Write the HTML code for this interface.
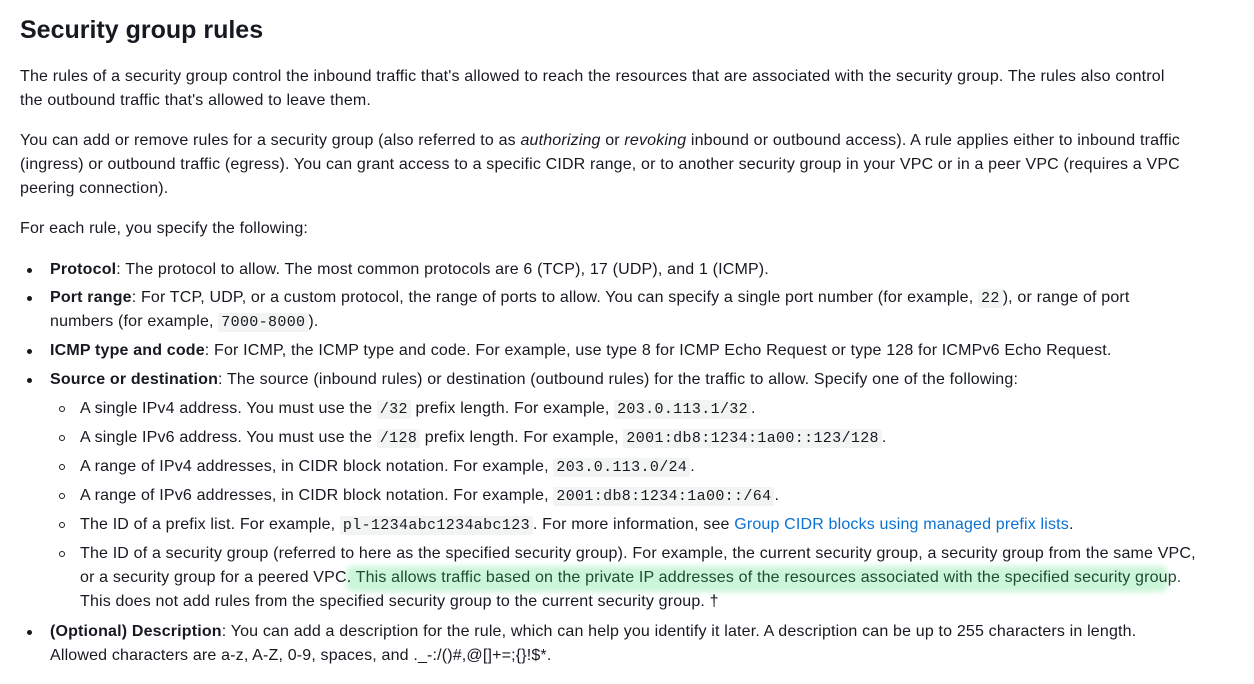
<!DOCTYPE html>
<html><head><meta charset="utf-8"><style>
body{margin:0;width:1254px;height:684px;background:#fff;position:relative;overflow:hidden;font-family:"Liberation Sans",sans-serif;color:#16191f}
.l{position:absolute;font-size:16px;line-height:20px;height:20px;white-space:nowrap;letter-spacing:0.17px}
h1{position:absolute;left:20px;top:13px;margin:0;font-size:25px;line-height:34px;font-weight:bold}
code{font-family:"Liberation Mono",monospace;font-size:15px;letter-spacing:0.35px;background:#f2f3f3;padding:1px 3px;border-radius:2px}
a{color:#0972d3;text-decoration:none}
.d{position:absolute;width:5px;height:5px;border-radius:50%;background:#16191f}
.c{position:absolute;width:4px;height:4px;border-radius:50%;border:1px solid #16191f}
.hl{position:absolute;left:346px;top:566px;width:822px;height:26px;background:rgba(140,236,170,.45);filter:blur(3px);border-radius:8px}
</style></head><body>
<h1>Security group rules</h1>
<div class="l" style="left:20px;top:67px">The rules of a security group control the inbound traffic that's allowed to reach the resources that are associated with the security group. The rules also control</div>
<div class="l" style="left:20px;top:91px">the outbound traffic that's allowed to leave them.</div>
<div class="l" style="left:20px;top:131px">You can add or remove rules for a security group (also referred to as <i>authorizing</i> or <i>revoking</i> inbound or outbound access). A rule applies either to inbound traffic</div>
<div class="l" style="left:20px;top:155px">(ingress) or outbound traffic (egress). You can grant access to a specific CIDR range, or to another security group in your VPC or in a peer VPC (requires a VPC</div>
<div class="l" style="left:20px;top:179px">peering connection).</div>
<div class="l" style="left:20px;top:219px">For each rule, you specify the following:</div>

<div class="d" style="left:27px;top:268px"></div>
<div class="l" style="left:50px;top:260px"><b>Protocol</b>: The protocol to allow. The most common protocols are 6 (TCP), 17 (UDP), and 1 (ICMP).</div>
<div class="d" style="left:27px;top:296px"></div>
<div class="l" style="left:50px;top:288px"><b>Port range</b>: For TCP, UDP, or a custom protocol, the range of ports to allow. You can specify a single port number (for example, <code>22</code>), or range of port</div>
<div class="l" style="left:50px;top:312px">numbers (for example, <code>7000-8000</code>).</div>
<div class="d" style="left:27px;top:349px"></div>
<div class="l" style="left:50px;top:341px"><b>ICMP type and code</b>: For ICMP, the ICMP type and code. For example, use type 8 for ICMP Echo Request or type 128 for ICMPv6 Echo Request.</div>
<div class="d" style="left:27px;top:378px"></div>
<div class="l" style="left:50px;top:370px"><b>Source or destination</b>: The source (inbound rules) or destination (outbound rules) for the traffic to allow. Specify one of the following:</div>

<div class="c" style="left:59px;top:406px"></div>
<div class="l" style="left:80px;top:399px">A single IPv4 address. You must use the <code>/32</code> prefix length. For example, <code>203.0.113.1/32</code>.</div>
<div class="c" style="left:59px;top:435px"></div>
<div class="l" style="left:80px;top:428px">A single IPv6 address. You must use the <code>/128</code> prefix length. For example, <code>2001:db8:1234:1a00::123/128</code>.</div>
<div class="c" style="left:59px;top:464px"></div>
<div class="l" style="left:80px;top:457px">A range of IPv4 addresses, in CIDR block notation. For example, <code>203.0.113.0/24</code>.</div>
<div class="c" style="left:59px;top:493px"></div>
<div class="l" style="left:80px;top:486px">A range of IPv6 addresses, in CIDR block notation. For example, <code>2001:db8:1234:1a00::/64</code>.</div>
<div class="c" style="left:59px;top:522px"></div>
<div class="l" style="left:80px;top:515px">The ID of a prefix list. For example, <code>pl-1234abc1234abc123</code>. For more information, see <a>Group CIDR blocks using managed prefix lists</a>.</div>
<div class="c" style="left:59px;top:551px"></div>
<div class="hl"></div>
<div class="l" style="left:80px;top:544px">The ID of a security group (referred to here as the specified security group). For example, the current security group, a security group from the same VPC,</div>
<div class="l" style="left:80px;top:568px">or a security group for a peered VPC. <span style="color:#1e4a36">This allows traffic based on the private IP addresses of the resources associated with the specified security group.</span></div>
<div class="l" style="left:80px;top:592px">This does not add rules from the specified security group to the current security group. †</div>

<div class="d" style="left:27px;top:630px"></div>
<div class="l" style="left:50px;top:622px"><b>(Optional) Description</b>: You can add a description for the rule, which can help you identify it later. A description can be up to 255 characters in length.</div>
<div class="l" style="left:50px;top:646px">Allowed characters are a-z, A-Z, 0-9, spaces, and ._-:/()#,@[]+=;{}!$*.</div>
</body></html>
